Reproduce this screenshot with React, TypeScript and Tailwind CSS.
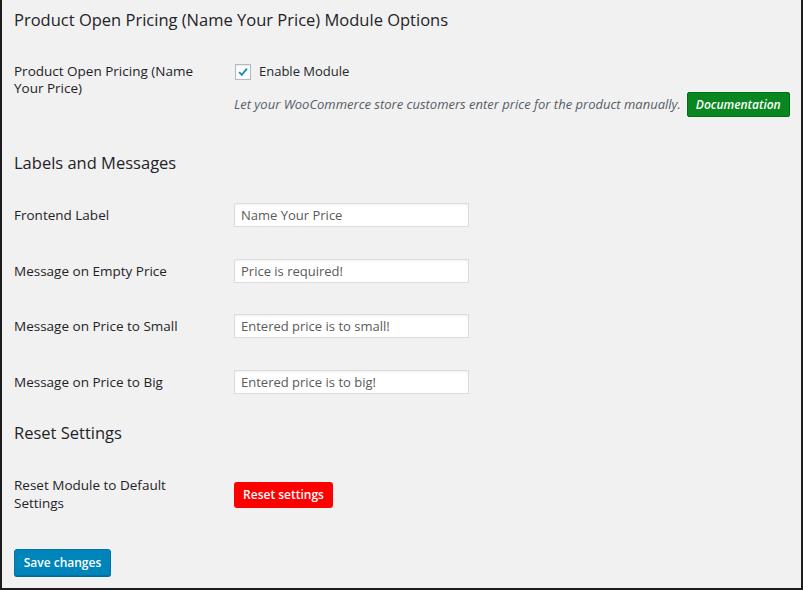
export default function App() {
  return (
    <div className="w-[803px] h-[590px] overflow-hidden bg-[#f1f1f1] border-l-2 border-r-2 border-b-2 border-[#1c1c1c] pl-3 pr-[10px] font-['Open_Sans',sans-serif] text-[#1f2327]">
      {/* Module title */}
      <h2 className="pt-[9px] text-[16.5px] leading-[22px]">
        Product Open Pricing (Name Your Price) Module Options
      </h2>

      {/* Enable module row */}
      <div className="mt-[32px] grid grid-cols-[220px_1fr]">
        <div className="text-[13.5px] leading-[17px] pr-4 w-[205px]">
          Product Open Pricing (Name Your Price)
        </div>
        <div>
          <label className="flex items-center h-[17px] gap-2 text-[13px] text-[#23282d]">
            <span className="flex items-center justify-center w-4 h-4 ml-px bg-white border border-[#b4b9be] shadow-[inset_0_1px_2px_rgba(0,0,0,0.1)]">
              <svg viewBox="0 0 16 16" className="w-[14px] h-[14px]">
                <path d="M3.5 8.2 L6.6 11.2 L12.5 4.2" fill="none" stroke="#1e8cbe" strokeWidth="2.2" />
              </svg>
            </span>
            Enable Module
          </label>
          <div className="mt-[12px] flex items-center gap-[6px] whitespace-nowrap">
            <span className="text-[13px] italic text-[#555d66]">
              Let your WooCommerce store customers enter price for the product manually.
            </span>
            <button className="h-[25px] px-[8px] rounded-[2px] bg-[#08861f] border border-[#006d17] text-white text-[12px] font-semibold italic">
              Documentation
            </button>
          </div>
        </div>
      </div>

      {/* Labels and messages */}
      <h2 className="mt-[35px] text-[16.5px] leading-[22px]">Labels and Messages</h2>
      <div className="mt-[29px] flex flex-col">
        {[
          ["Frontend Label", "Name Your Price", "mt-0"],
          ["Message on Empty Price", "Price is required!", "mt-[32px]"],
          ["Message on Price to Small", "Entered price is to small!", "mt-[31px]"],
          ["Message on Price to Big", "Entered price is to big!", "mt-[32px]"],
        ].map(([label, value, mt]) => (
          <div key={label} className={`grid grid-cols-[220px_1fr] items-center ${mt}`}>
            <div className="text-[13.5px]">{label}</div>
            <input
              defaultValue={value}
              className="w-[235px] h-6 px-[6px] bg-white border border-[#ddd] shadow-[inset_0_1px_2px_rgba(0,0,0,0.07)] text-[13px] text-[#5a5a5a] outline-none"
            />
          </div>
        ))}
      </div>

      {/* Reset */}
      <h2 className="mt-[28px] text-[16.5px] leading-[22px]">Reset Settings</h2>
      <div className="mt-[32px] grid grid-cols-[220px_1fr] items-center">
        <div className="text-[13.5px] leading-[18px] w-[172px]">
          Reset Module to Default Settings
        </div>
        <div>
          <button className="h-[26px] w-[99px] rounded-[3px] bg-[#ff0000] text-white text-[12px] font-semibold">
            Reset settings
          </button>
        </div>
      </div>

      <button className="mt-[37px] h-[27px] w-[97px] rounded-[3px] bg-[#0085ba] border border-[#0073aa] shadow-[0_1px_0_#006799] text-white text-[12px] font-semibold">
        Save changes
      </button>
    </div>
  );
}
